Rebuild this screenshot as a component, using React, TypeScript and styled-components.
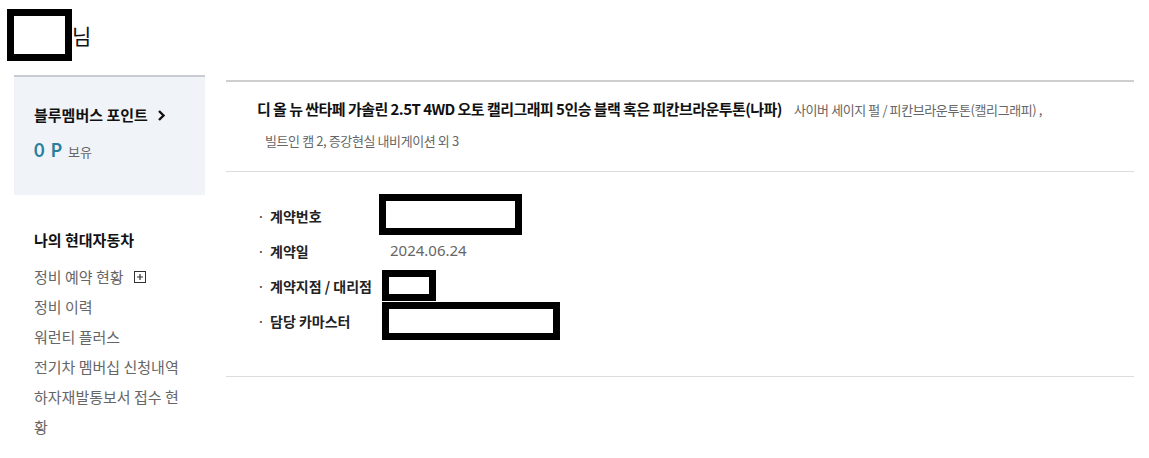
import styled, { createGlobalStyle } from "styled-components";

const GlobalStyle = createGlobalStyle`
  body {
    margin: 0;
    background: #fff;
    font-family: "Noto Sans CJK KR", "Noto Sans", sans-serif;
    color: #111;
  }
`;

const Page = styled.div`
  width: 1149px;
  height: 458px;
  overflow: hidden;
`;

const Header = styled.div`
  display: flex;
  align-items: center;
  padding: 9px 0 0 7px;
  height: 52px;
  font-size: 21px;
  line-height: 1;
`;

const NameMask = styled.div`
  width: 65px;
  height: 52px;
  box-sizing: border-box;
  border: 7px solid #000;
  background: #fff;
`;

const Main = styled.div`
  display: grid;
  grid-template-columns: 191px 908px;
  column-gap: 21px;
  padding: 14px 0 0 14px;
  align-items: start;
`;

const Sidebar = styled.aside`
  display: flex;
  flex-direction: column;
`;

const PointBox = styled.div`
  border-top: 2px solid #c9cdd3;
  background: #f0f3f7;
  padding: 27px 20px 31px;
`;

const PointTitle = styled.div`
  display: flex;
  align-items: center;
  gap: 9px;
  font-size: 15px;
  line-height: 22px;
  font-weight: 700;
  color: #111;
`;

const PointRow = styled.div`
  display: flex;
  align-items: baseline;
  gap: 5px;
  margin-top: 12px;
  line-height: 24px;
`;

const PointValue = styled.span`
  font-family: "Lato", "Noto Sans", sans-serif;
  font-size: 18px;
  font-weight: 700;
  color: #2a7f9c;
  letter-spacing: 1px;
`;

const PointUnit = styled.span`
  font-size: 13px;
  color: #666;
`;

const MenuTitle = styled.div`
  margin-top: 34px;
  padding-left: 20px;
  font-size: 15px;
  line-height: 22px;
  font-weight: 700;
  color: #111;
`;

const MenuList = styled.ul`
  list-style: none;
  margin: 11px 0 0;
  padding: 0 0 0 20px;
  width: 150px;
`;

const MenuItem = styled.li`
  display: flex;
  align-items: center;
  gap: 10px;
  font-size: 15px;
  line-height: 30px;
  color: #666;
`;

const Content = styled.section`
  margin-top: 5px;
  border-top: 2px solid #cfcfcf;
`;

const Product = styled.div`
  padding: 15px 0 18px 31px;
  border-bottom: 1px solid #dcdcdc;
`;

const ProductLine = styled.div<{ $indent?: number }>`
  display: flex;
  align-items: baseline;
  gap: 12px;
  line-height: 24px;
  padding-left: ${(p) => p.$indent ?? 0}px;
  margin-top: ${(p) => (p.$indent ? 7 : 0)}px;
`;

const ProductName = styled.span`
  font-size: 15px;
  font-weight: 700;
  color: #111;
  letter-spacing: -0.55px;
`;

const ProductOption = styled.span`
  font-size: 13px;
  color: #666;
  letter-spacing: -0.4px;
`;

const InfoList = styled.ul`
  list-style: none;
  margin: 0;
  padding: 26px 0 38px 31px;
  border-bottom: 1px solid #dcdcdc;
`;

const InfoRow = styled.li`
  display: grid;
  grid-template-columns: 13px 120px 1fr;
  align-items: center;
  height: 35px;
  font-size: 14px;
`;

const Bullet = styled.span`
  color: #444;
`;

const Label = styled.span`
  font-weight: 700;
  color: #222;
  white-space: nowrap;
`;

const Value = styled.span`
  position: relative;
  color: #666;
  font-family: "Noto Sans", sans-serif;
  font-size: 15px;
  height: 35px;
  line-height: 35px;
`;

const Mask = styled.span<{ $l: number; $t: number; $w: number; $h: number }>`
  position: absolute;
  left: ${(p) => p.$l}px;
  top: ${(p) => p.$t}px;
  width: ${(p) => p.$w}px;
  height: ${(p) => p.$h}px;
  box-sizing: border-box;
  border: 7px solid #000;
  background: #fff;
`;

const Chevron = () => (
  <svg width="9" height="13" viewBox="0 0 9 13">
    <path d="M2 2 L6.5 6.5 L2 11" fill="none" stroke="#111" strokeWidth="2.4" />
  </svg>
);

const PlusBox = () => (
  <svg width="12" height="12" viewBox="0 0 12 12">
    <rect x="0.5" y="0.5" width="11" height="11" fill="none" stroke="#333" />
    <path d="M3 6 H9 M6 3 V9" stroke="#333" strokeWidth="1.2" />
  </svg>
);

const menu = ["정비 예약 현황", "정비 이력", "워런티 플러스", "전기차 멤버십 신청내역", "하자재발통보서 접수 현황"];

export default function App() {
  return (
    <Page>
      <GlobalStyle />
      <Header>
        <NameMask />
        <span>님</span>
      </Header>
      <Main>
        <Sidebar>
          <PointBox>
            <PointTitle>
              블루멤버스 포인트 <Chevron />
            </PointTitle>
            <PointRow>
              <PointValue>0 P</PointValue>
              <PointUnit>보유</PointUnit>
            </PointRow>
          </PointBox>
          <MenuTitle>나의 현대자동차</MenuTitle>
          <MenuList>
            {menu.map((m, i) => (
              <MenuItem key={m}>
                <span>{m}</span>
                {i === 0 && <PlusBox />}
              </MenuItem>
            ))}
          </MenuList>
        </Sidebar>
        <Content>
          <Product>
            <ProductLine>
              <ProductName>디 올 뉴 싼타페 가솔린 2.5T 4WD 오토 캘리그래피 5인승 블랙 혹은 피칸브라운투톤(나파)</ProductName>
              <ProductOption>사이버 세이지 펄 / 피칸브라운투톤(캘리그래피) ,</ProductOption>
            </ProductLine>
            <ProductLine $indent={8}>
              <ProductOption>빌트인 캠 2, 증강현실 내비게이션 외 3</ProductOption>
            </ProductLine>
          </Product>
          <InfoList>
            <InfoRow>
              <Bullet>·</Bullet>
              <Label>계약번호</Label>
              <Value>
                <Mask $l={-11} $t={-4} $w={143} $h={41} />
              </Value>
            </InfoRow>
            <InfoRow>
              <Bullet>·</Bullet>
              <Label>계약일</Label>
              <Value>2024.06.24</Value>
            </InfoRow>
            <InfoRow>
              <Bullet>·</Bullet>
              <Label>계약지점 / 대리점</Label>
              <Value>
                <Mask $l={-8} $t={2} $w={54} $h={31} />
              </Value>
            </InfoRow>
            <InfoRow>
              <Bullet>·</Bullet>
              <Label>담당 카마스터</Label>
              <Value>
                <Mask $l={-8} $t={-1} $w={178} $h={38} />
              </Value>
            </InfoRow>
          </InfoList>
        </Content>
      </Main>
    </Page>
  );
}
